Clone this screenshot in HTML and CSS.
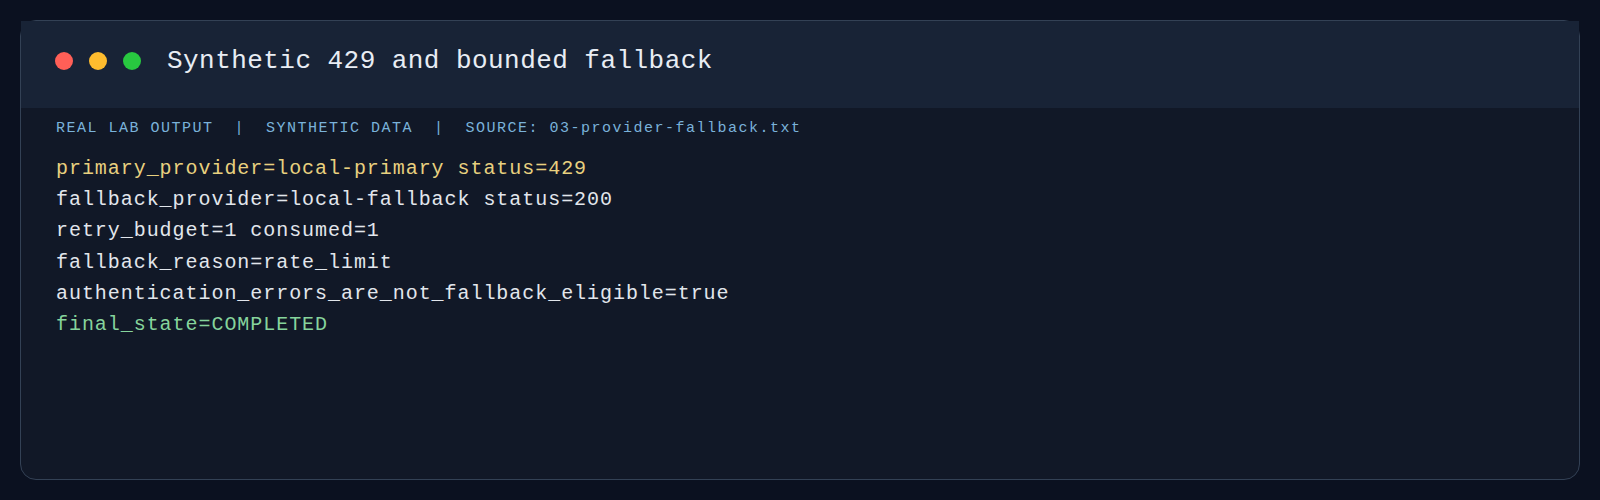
FILE: index.html
```html
<!DOCTYPE html>
<html lang="en">
<head>
<meta charset="utf-8">
<title>Synthetic 429 and bounded fallback</title>
<link rel="stylesheet" href="styles.css">
</head>
<body>
<div class="card">
  <div class="header">
    <span class="dot red"></span>
    <span class="dot yellow"></span>
    <span class="dot green"></span>
    <span class="title">Synthetic 429 and bounded fallback</span>
  </div>
  <div class="content">
    <div class="meta">REAL LAB OUTPUT  |  SYNTHETIC DATA  |  SOURCE: 03-provider-fallback.txt</div>
    <div class="code">
      <div class="line warn">primary_provider=local-primary status=429</div>
      <div class="line">fallback_provider=local-fallback status=200</div>
      <div class="line">retry_budget=1 consumed=1</div>
      <div class="line">fallback_reason=rate_limit</div>
      <div class="line">authentication_errors_are_not_fallback_eligible=true</div>
      <div class="line ok">final_state=COMPLETED</div>
    </div>
  </div>
</div>
</body>
</html>
```

FILE: styles.css
```css
html, body {
  margin: 0;
  padding: 0;
  background: #0b1120;
}
body {
  padding: 20px;
  font-family: "Liberation Mono", "DejaVu Sans Mono", monospace;
}
.card {
  box-sizing: border-box;
  height: 460px;
  border: 1px solid #334155;
  border-radius: 16px;
  background: #111827;
}
.header {
  box-sizing: border-box;
  height: 87px;
  background: #182336;
  display: flex;
  align-items: center;
  padding: 0 0 8px 34px;
}
.dot {
  width: 18px;
  height: 18px;
  border-radius: 50%;
  margin-right: 16px;
  flex: none;
}
.dot.red { background: #ff5f57; }
.dot.yellow { background: #febc2e; }
.dot.green { background: #28c840; margin-right: 26px; }
.title {
  color: #e8edf4;
  font-size: 26px;
  letter-spacing: 0.45px;
  line-height: 30px;
}
.content {
  padding: 11px 0 0 35px;
}
.meta {
  color: #7ab2da;
  font-size: 15px;
  letter-spacing: 1.5px;
  line-height: 20px;
  white-space: pre;
}
.code {
  margin-top: 14px;
  font-size: 20px;
  letter-spacing: 0.95px;
  line-height: 31.2px;
  color: #e2e6ec;
}
.line { white-space: pre; }
.line.warn { color: #e8d07f; }
.line.ok { color: #86d49c; }
```
